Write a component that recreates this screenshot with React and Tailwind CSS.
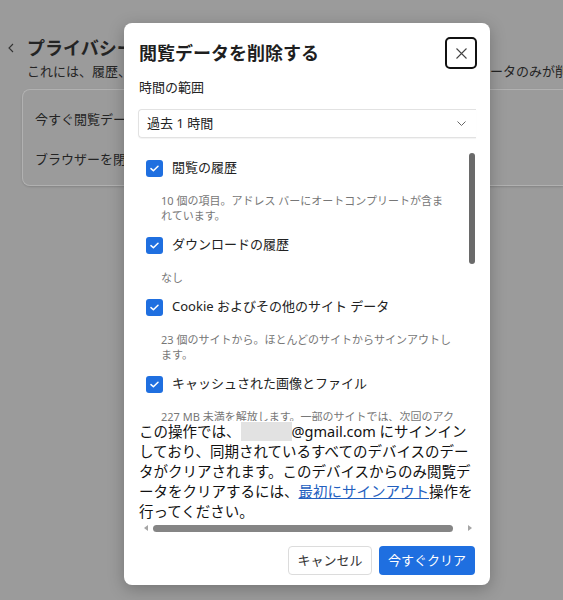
import React from 'react';

const items = [
  { label: '閲覧の履歴', desc: ['10 個の項目。アドレス バーにオートコンプリートが含ま', 'れています。'] },
  { label: 'ダウンロードの履歴', desc: ['なし'] },
  { label: 'Cookie およびその他のサイト データ', desc: ['23 個のサイトから。ほとんどのサイトからサインアウトし', 'ます。'] },
  { label: 'キャッシュされた画像とファイル', desc: ['227 MB 未満を解放します。一部のサイトでは、次回のアク', 'セス時に読み込みが遅くなる可能性があります。'] },
];

const Checkbox = () => (
  <div className="w-[17px] h-[17px] rounded-[3px] bg-[#1f6fe0] flex items-center justify-center shrink-0">
    <svg width="9" height="7" viewBox="0 0 9 7" fill="none">
      <path d="M1 3.6 L3.4 5.8 L8 1.2" stroke="white" strokeWidth="1.5" strokeLinecap="round" strokeLinejoin="round" />
    </svg>
  </div>
);

const App = () => {
  return (
    <div className="relative w-[563px] h-[600px] overflow-hidden bg-[#9b9b9b] font-['Noto_Sans','Noto_Sans_CJK_JP',sans-serif] text-[#242424]">
      {/* page behind the dialog */}
      <div className="pt-[36px]">
        <div className="flex items-center h-[24px]">
          <svg className="ml-[8px] mr-[13px]" width="6" height="10" viewBox="0 0 6 10" fill="none">
            <path d="M5 1 L1 5 L5 9" stroke="#333" strokeWidth="1.1" />
          </svg>
          <span className="text-[18px] font-bold leading-[24px] whitespace-nowrap">プライバシーとセキュリティ</span>
        </div>
        <div className="flex pl-[27px] mt-[1px] text-[13px] leading-[20px] whitespace-nowrap">
          <span className="w-[463px] overflow-hidden shrink-0">これには、履歴、Cookie、キャッシュが含まれます。このデバイスからはデ</span>
          <span>ータのみが削除されます。</span>
        </div>
        <div className="ml-[22px] mt-[8px] h-[97px] rounded-l-lg border border-r-0 border-[#b1b1b1] shadow-[0_1px_2px_rgba(0,0,0,0.15)] flex flex-col pl-[12px] text-[13px]">
          <div className="h-[20px] leading-[20px] mt-[19px]">今すぐ閲覧データを削除</div>
          <div className="h-[20px] leading-[20px] mt-[20px]">ブラウザーを閉じるときに閲覧データを削除</div>
        </div>
      </div>

      {/* dialog */}
      <div className="absolute left-[124px] top-[23px] w-[366px] h-[562px] bg-white rounded-lg shadow-[0_4px_16px_rgba(0,0,0,0.25)] px-[14px] overflow-hidden">
        <div className="flex items-center justify-between mt-[14px] h-[32px]">
          <h2 className="pl-px text-[18px] font-bold leading-[32px] text-[#1f1f1f]">閲覧データを削除する</h2>
          <button className="w-[32px] h-[32px] -mr-px rounded-[5px] border-2 border-[#111] flex items-center justify-center">
            <svg width="11" height="11" viewBox="0 0 11 11" fill="none">
              <path d="M0.5 0.5 L10.5 10.5 M10.5 0.5 L0.5 10.5" stroke="#444" strokeWidth="1.1" />
            </svg>
          </button>
        </div>
        <div className="mt-[8px] pl-px text-[13px] leading-[20px] text-[#222]">時間の範囲</div>
        <div className="mt-[12px] h-[29px] rounded-l-[4px] border border-r-0 border-[#e2e2e2] shadow-[0_1px_1px_rgba(0,0,0,0.05)] flex items-center justify-between pl-[8px] pr-[10px] text-[13px] text-[#222]">
          <span>過去 1 時間</span>
          <svg width="9" height="5" viewBox="0 0 9 5" fill="none">
            <path d="M0.5 0.5 L4.5 4.5 L8.5 0.5" stroke="#666" strokeWidth="1" />
          </svg>
        </div>

        {/* checkbox list */}
        <div className="relative mt-[7px] h-[276px] overflow-hidden pt-[14px] pl-[8px]">
          <div className="absolute right-[1px] top-[8px] w-[6px] h-[111px] rounded-full bg-[#6a6a6a]" />
          {items.map((item) => (
            <div key={item.label} className="mb-[13px]">
              <div className="flex items-center h-[18px] gap-[9px]">
                <Checkbox />
                <span className="text-[13px] text-[#222] whitespace-nowrap">{item.label}</span>
              </div>
              <div className="mt-[16px] pl-[15px] text-[11px] leading-[15px] text-[#777] whitespace-nowrap">
                {item.desc.map((line) => (
                  <div key={line}>{line}</div>
                ))}
              </div>
            </div>
          ))}
        </div>

        {/* sync notice */}
        <div className="pl-px text-[14.5px] leading-[20px] text-[#111] whitespace-nowrap">
          <div className="flex items-center">
            この操作では、
            <span className="inline-block w-[51px] h-[19px] bg-[#e2e2e2]" />
            @gmail.com にサインイン
          </div>
          <div>しており、同期されているすべてのデバイスのデー</div>
          <div>タがクリアされます。このデバイスからのみ閲覧デ</div>
          <div>
            ータをクリアするには、<a href="#" className="text-[#2360bf] underline">最初にサインアウト</a>操作を
          </div>
          <div>行ってください。</div>
        </div>

        {/* horizontal scrollbar */}
        <div className="flex items-center h-[12px] mt-px pl-[6px] pr-[4px] gap-[3px]">
          <svg width="4" height="6" viewBox="0 0 4 6"><path d="M4 0 L0 3 L4 6 Z" fill="#a5a5a5" /></svg>
          <div className="ml-[2px] w-[300px] h-[7px] rounded-full bg-[#858585]" />
          <div className="flex-1" />
          <svg width="4" height="6" viewBox="0 0 4 6"><path d="M0 0 L4 3 L0 6 Z" fill="#a5a5a5" /></svg>
        </div>

        {/* actions */}
        <div className="flex justify-end gap-[7px] mt-[12px] pr-px text-[13px]">
          <button className="w-[84px] h-[29px] rounded-[4px] border border-[#dcdcdc] bg-white text-[#333]">キャンセル</button>
          <button className="w-[96px] h-[29px] rounded-[4px] bg-[#1f6fe0] text-white">今すぐクリア</button>
        </div>
      </div>
    </div>
  );
};

export default App;
